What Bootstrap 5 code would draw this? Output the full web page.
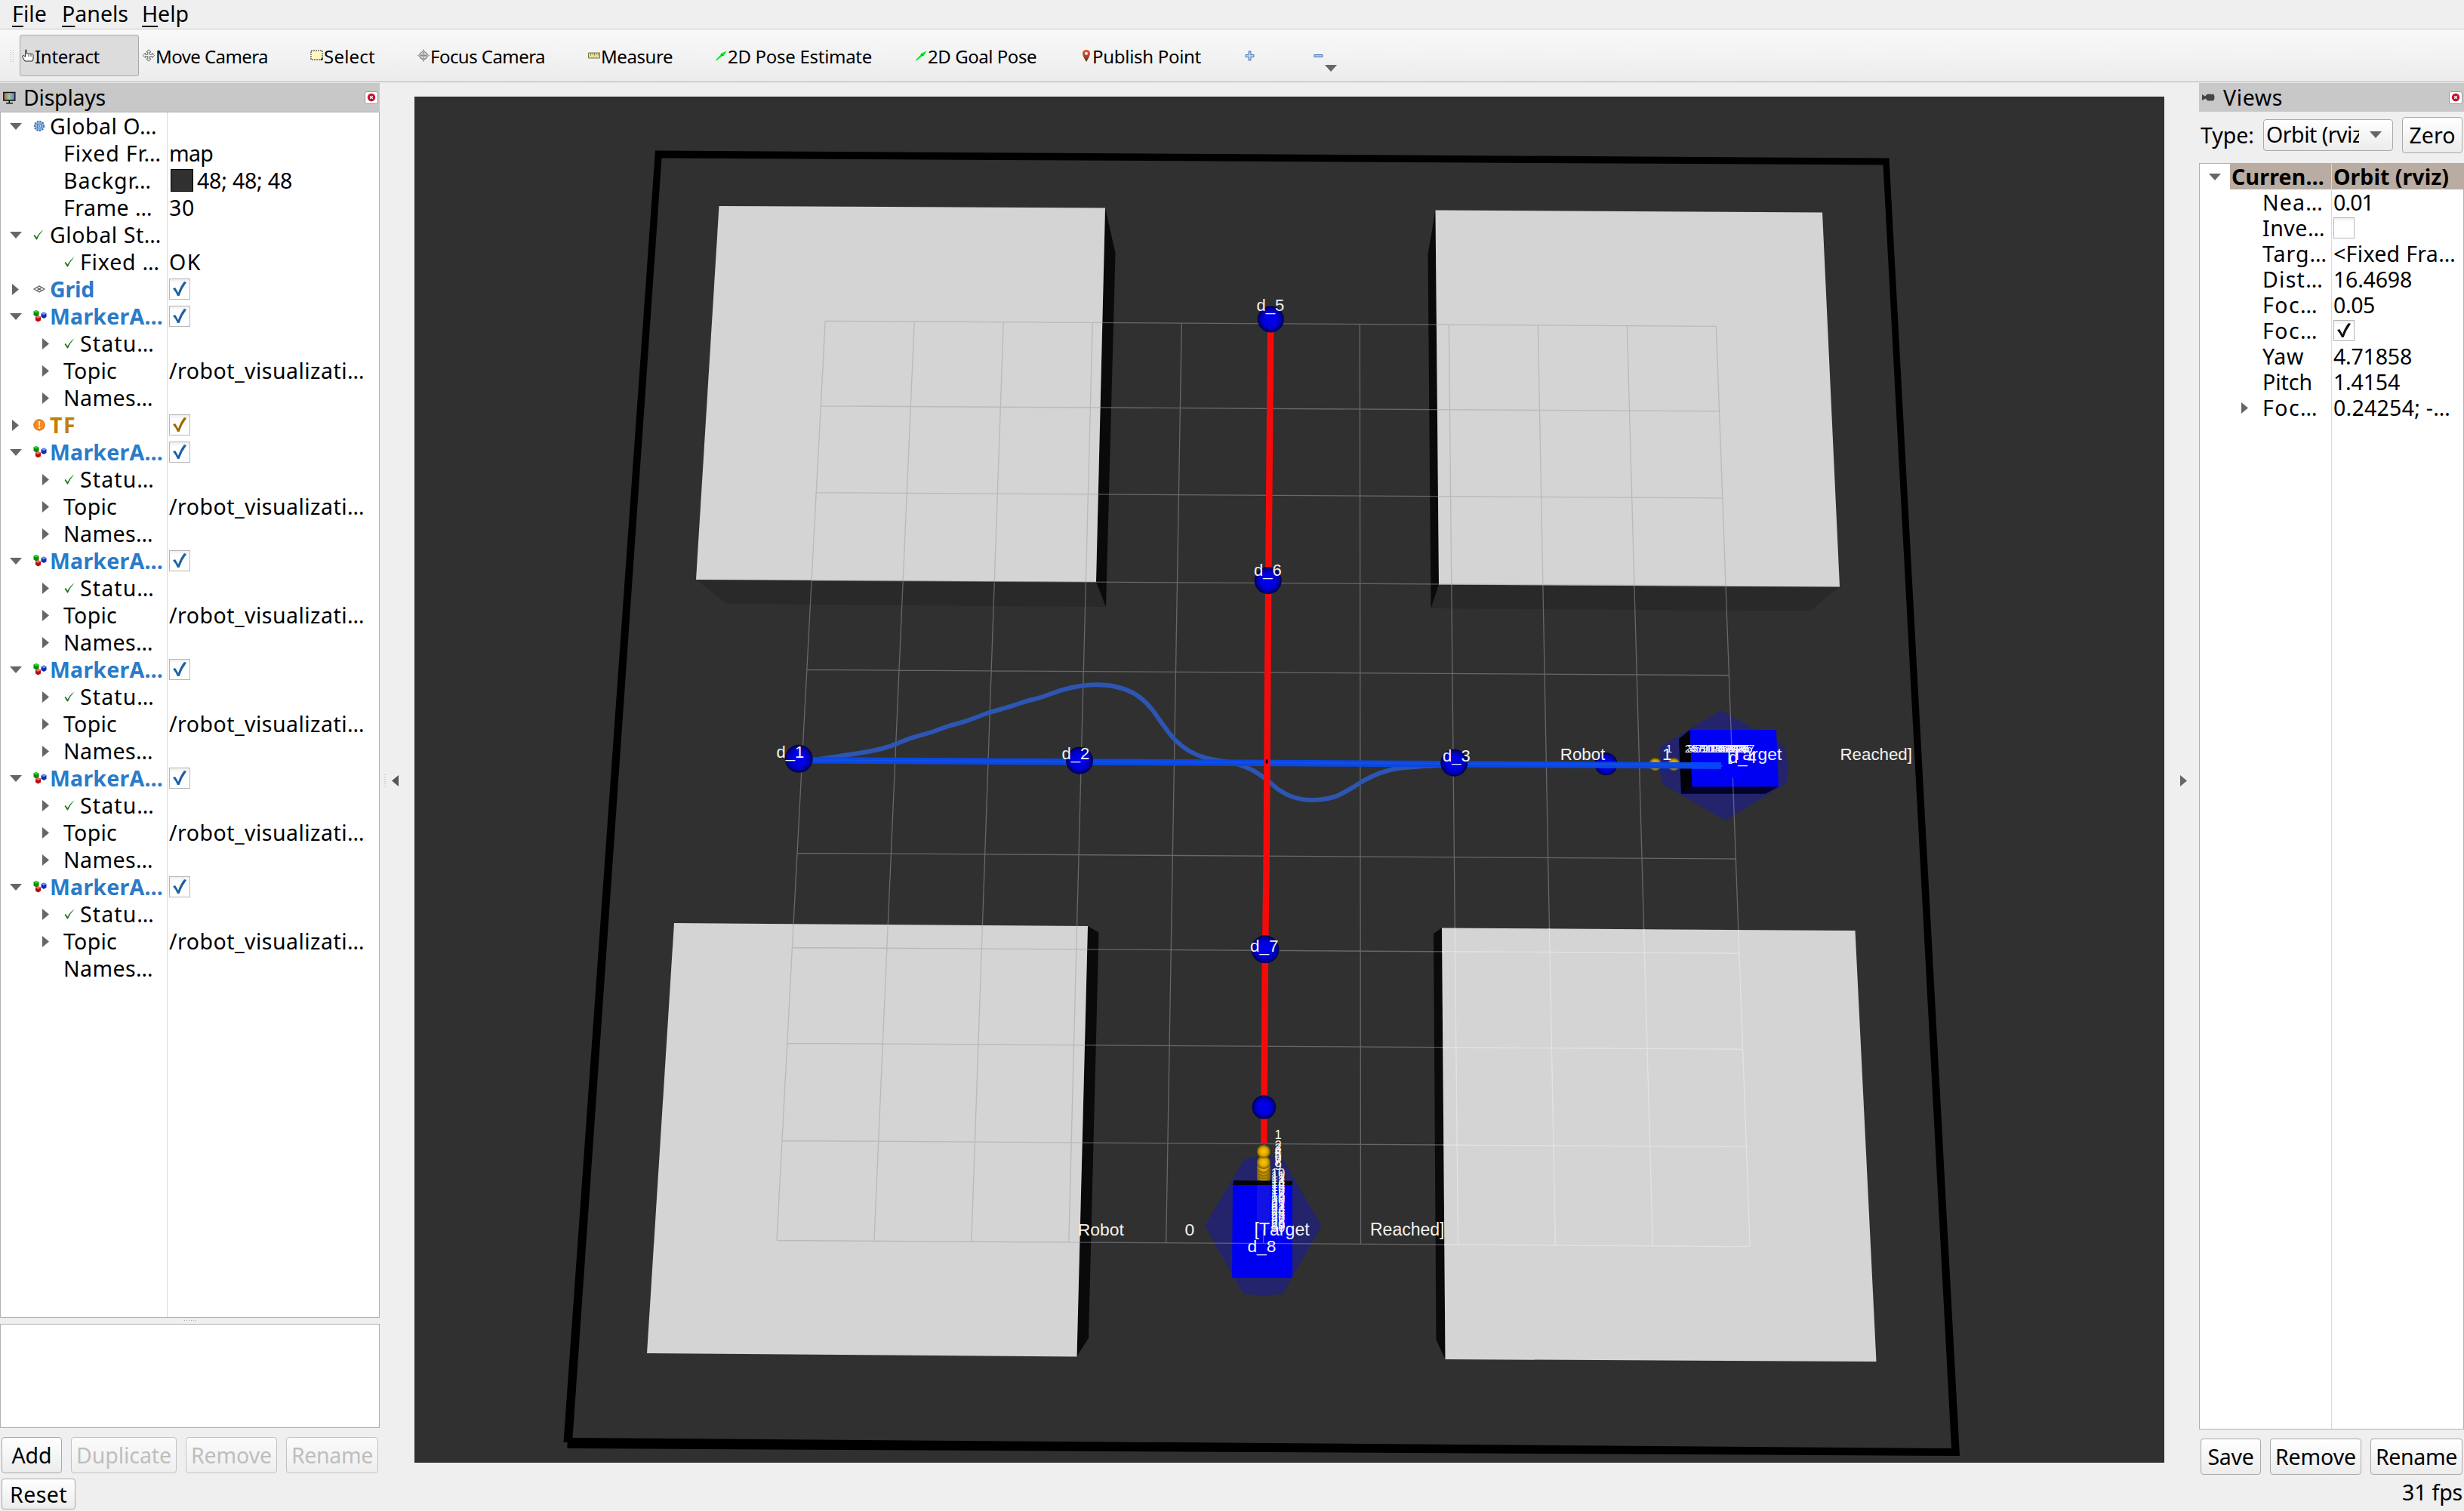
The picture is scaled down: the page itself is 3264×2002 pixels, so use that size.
<!DOCTYPE html>
<html lang="en">
<head>
<meta charset="utf-8">
<title>RViz</title>
<link rel="stylesheet" href="https://cdn.jsdelivr.net/npm/bootstrap@5.3.0/dist/css/bootstrap.min.css">
<script src="https://cdn.jsdelivr.net/npm/bootstrap@5.3.0/dist/js/bootstrap.bundle.min.js"></script>
<style>
body{width:3264px;height:2002px;overflow:hidden;background:#efefef;color:#000;font-family:"Noto Sans","Open Sans",sans-serif;font-size:28.5px;line-height:34px}
svg{display:block;flex:none}
.fit{white-space:nowrap;display:inline-block}
.menubar{height:39px;border-bottom:1px solid #cacaca;padding-left:16px}
.menubar u{text-decoration-thickness:2px;text-underline-offset:5px;text-decoration-skip-ink:none}
.m-item{height:38px;line-height:37px}
.toolstrip{height:70px;border-bottom:1px solid #b0b0b0;background:linear-gradient(#f9f9f9,#ececec);font-size:24px;padding-left:13px}
.tool{height:55px;padding:0 0 0 5px;gap:1px;border-radius:3px;flex:none}
.tool .fit{padding-top:3px}
.tool.on{background:#dcdcdc;border:1px solid #a8a8a8;padding-left:2px}
.work{height:1850px}
.dock-l{width:503px;padding-top:1px}
.dock-r{width:351px;padding-top:1px}
.dockhead{height:38px;background:#c8c8c8;flex:none}
.closer{width:18px;height:17px;background:#fff;border:1px solid #999;border-radius:3px;flex:none}
.tree{background:#fff;border:1px solid #b0b0b0;flex:none}
.tree .c1{border-right:1px solid #dadada}
.r36{height:36px}.r34{height:34px}
.cellbox{width:28px;height:28px;border:1px solid #b6b6b6;background:linear-gradient(#eee,#fff 20%)}
.swatch{width:30px;height:30px;background:#303030;border:1px solid #000;margin:0 5px 0 2px}
.b1{color:#2a7bc8;font-weight:700}.b2{color:#c08000;font-weight:700}
.pbtn{height:48px;border:1px solid #a9a9a9;border-radius:4px;background:linear-gradient(#fff,#ececec);color:#000;padding:0;flex:none;font-size:28.5px;line-height:34px}
.pbtn:disabled{border-color:#c2c2c2;color:#bebebe;opacity:1;background:linear-gradient(#fbfbfb,#eee)}
.split{width:46px}
.sel{background:#b9aca2;font-weight:700}
.combo{width:172px;height:42px}
.status{height:41px}
#scene text{font-family:"Liberation Sans",Arial,sans-serif;fill:#f2f2f2;font-kerning:none}
</style>
</head>
<body>
<svg width="0" height="0" class="position-absolute">
 <symbol id="i-down" viewBox="0 0 16 9"><path d="M0 0H16L8 9Z" fill="#666"/></symbol>
 <symbol id="i-right" viewBox="0 0 9 15"><path d="M0 0L9 7.5L0 15Z" fill="#666"/></symbol>
 <symbol id="i-ok" viewBox="0 0 14 14"><path d="M.5 8L2 7L4.5 10.5Q8 4 13.5 .5Q8 6 5 13.5H4Z" fill="#1d7a1d"/></symbol>
 <symbol id="i-tick" viewBox="0 0 26 26"><path d="M4 12.500L7 11Q9.500 14.500 11 18Q14 9 19 3L22 4Q16 12 12.500 22H10Q7.500 16 4 12.500Z" fill="currentColor"/></symbol>
 <symbol id="i-gear" viewBox="0 0 16 16"><circle cx="8" cy="8" r="6" fill="#8fb4e2" stroke="#4479b8" stroke-width="2.500" stroke-dasharray="2.200 1.300"/><circle cx="8" cy="8" r="5" fill="#8fb4e2"/><path d="M5.500 5.500H10.500V10.500H5.500Z" fill="#c4d8f2" stroke="#3f74b6"/><path d="M8 7V9M7 8H9" stroke="#3f74b6"/></symbol>
 <symbol id="i-grid" viewBox="0 0 16 16"><path d="M1 8L8 4L15 8L8 12ZM4.500 6L11.500 10M11.500 6L4.500 10" fill="none" stroke="#555" stroke-width="1.100"/></symbol>
 <symbol id="i-cubes" viewBox="0 0 18 17"><path d="M4 .5L7.500 2V7L4 9L.5 7V2Z" fill="#0a8a0a"/><path d="M4 .5L7.500 2.300L4 4.300L.5 2.300Z" fill="#1be61b"/><path d="M14 3L17.500 4.700V9.500L14 11.500L10.500 9.500V4.700Z" fill="#0c2cb4"/><path d="M14 3L17.500 5L14 7L10.500 5Z" fill="#6c90f5"/><path d="M6.500 7.500L10 9.200V14L6.500 16L3 14V9.200Z" fill="#b80c0c"/><path d="M6.500 7.500L10 9.500L6.500 11.500L3 9.500Z" fill="#f26a6a"/></symbol>
 <symbol id="i-warn" viewBox="0 0 16 16"><circle cx="8" cy="8" r="7.200" fill="#fb8a1e" stroke="#c7660e"/><path d="M7 3.200H9.200L8.800 9H7.400ZM7 10.500H9.200V12.700H7Z" fill="#fff"/></symbol>
 <symbol id="i-x" viewBox="0 0 12 12"><circle cx="6" cy="6" r="5.200" fill="#c8102e"/><path d="M4.200 4.200L7.800 7.800M7.800 4.200L4.200 7.800" stroke="#fff" stroke-width="1.300"/></symbol>
 <symbol id="i-arrow" viewBox="0 0 16 16"><path d="M1 13.500L8 6L7.500 5L15.500 1.500L11.500 8.500L10 8L2 14.500Z" fill="#00ee28"/><path d="M8 6L10 8" stroke="#087a18"/></symbol>
</svg>

<nav class="menubar d-flex">
 <div class="m-item" style="width:66px"><span class="fit" data-w="45"><u>F</u>ile</span></div>
 <div class="m-item" style="width:106px"><span class="fit" data-w="87"><u>P</u>anels</span></div>
 <div class="m-item"><span class="fit" data-w="61"><u>H</u>elp</span></div>
</nav>

<div class="toolstrip d-flex align-items-center">
 <svg width="13" height="18"><path d="M1.500 1V18M4.500 1V18" stroke="#b4b4b4" stroke-dasharray="1 2"/></svg>
 <div class="tool on d-flex align-items-center" style="width:158px"><svg width="16" height="17" viewBox="0 0 16 17"><path d="M4.500 10V1.500Q5.500 .3 6.500 1.500V6.500L7.500 5.500L9 6.500L10.500 5.800L12 6.800L13.500 6.300L15 7.500V13L14 16H4L1 11V9L2.500 8.500Z" fill="#fff" stroke="#222"/><path d="M9 7V10M12 7V10" stroke="#444"/></svg><span class="fit" data-w="85">Interact</span></div>
 <div class="tool d-flex align-items-center" style="width:222px"><svg width="16" height="17" viewBox="0 0 16 17"><path d="M8 .8L11 4H9.200V7.200H12.500V5.200L15.500 8.500L12.500 11.500V9.700H9.200V13H11L8 16.200L5 13H6.800V9.700H3.500V11.500L.5 8.500L3.500 5.200V7.200H6.800V4H5Z" fill="#f4f4f4" stroke="#555" stroke-width=".9"/></svg><span class="fit" data-w="148">Move Camera</span></div>
 <div class="tool d-flex align-items-center" style="width:142px"><svg width="17" height="17" viewBox="0 0 17 17"><path d="M1 2H16V14H1Z" fill="#fff6be" stroke="#222" stroke-dasharray="2 1"/><path d="M13 14.500L16.500 11V14.500Z"/></svg><span class="fit" data-w="67">Select</span></div>
 <div class="tool d-flex align-items-center" style="width:226px"><svg width="16" height="17" viewBox="0 0 16 17"><circle cx="8" cy="8.500" r="5" fill="none" stroke="#777" stroke-width="1.200"/><circle cx="8" cy="8.500" r="2.500" fill="none" stroke="#888"/><path d="M8 .5L9.500 4H6.500ZM8 16.500L9.500 13H6.500ZM.3 8.500L4 7V10ZM15.700 8.500L12 7V10Z" fill="#ddd" stroke="#777" stroke-width=".7"/><path d="M8 4V13M4 8.500H12" stroke="#888"/></svg><span class="fit" data-w="151">Focus Camera</span></div>
 <div class="tool d-flex align-items-center" style="width:168px"><svg width="16" height="16" viewBox="0 0 16 16"><path d="M.5 4H15.500V11H.5Z" fill="#e6dc9c" stroke="#777442"/><path d="M3.500 4V7.500M6 4V6.500M8.500 4V7.500M11 4V6.500M13.500 4V7.500" stroke="#777442" stroke-width=".8"/></svg><span class="fit" data-w="94">Measure</span></div>
 <div class="tool d-flex align-items-center" style="width:265px"><svg width="16" height="16"><use href="#i-arrow"/></svg><span class="fit" data-w="190">2D Pose Estimate</span></div>
 <div class="tool d-flex align-items-center" style="width:220px"><svg width="16" height="16"><use href="#i-arrow"/></svg><span class="fit" data-w="143">2D Goal Pose</span></div>
 <div class="tool d-flex align-items-center" style="width:217px"><svg width="14" height="18" viewBox="0 0 14 18"><defs><linearGradient id="pg" x2="0" y2="1"><stop offset="0" stop-color="#f0593a"/><stop offset=".5" stop-color="#b0442c"/><stop offset="1" stop-color="#3c3418"/></linearGradient></defs><path d="M7 1Q12 1 12 6Q12 9 7 17Q2 9 2 6Q2 1 7 1Z" fill="url(#pg)"/><circle cx="7" cy="5.800" r="1.900" fill="#fff"/></svg><span class="fit" data-w="143">Publish Point</span></div>
 <div class="tool d-flex align-items-center" style="width:91px"><svg width="13" height="14" viewBox="0 0 13 14"><path d="M5 1H8V5.500H12V8.500H8V13H5V8.500H1V5.500H5Z" fill="#b8d0ee" stroke="#4a78b8"/></svg></div>
 <div class="tool d-flex align-items-center"><svg width="13" height="14" viewBox="0 0 13 14"><path d="M1 5.500H12V8.500H1Z" fill="#a9c6ea" stroke="#4a78b8"/></svg></div>
 <svg class="align-self-end" width="16" height="9" style="margin:0 0 13px 2px"><use href="#i-down"/></svg>
</div>

<main class="work d-flex">
 <section class="dock-l d-flex flex-column">
  <header class="dockhead d-flex align-items-center ps-1">
   <svg width="17" height="17" viewBox="0 0 17 17"><defs><linearGradient id="mg"><stop offset="0" stop-color="#b85a5a"/><stop offset=".5" stop-color="#8fd08f"/><stop offset="1" stop-color="#6a6ae0"/></linearGradient></defs><path d="M.8 1.500H15.800V12H.8Z" fill="url(#mg)" stroke="#111" stroke-width="1.400"/><path d="M8.300 12V15M4 15.700H13" stroke="#111" stroke-width="1.500"/></svg>
   <span class="fit" data-w="108" style="margin-left:10px">Displays</span>
   <div class="closer ms-auto d-flex align-items-center justify-content-center"><svg width="12" height="12"><use href="#i-x"/></svg></div><div style="width:2px"></div>
  </header>
  <div class="tree d-flex" style="height:1598px">
   <div class="c1" id="dl" style="width:221px"></div>
   <div id="dv" class="flex-fill"></div>
  </div>
  <svg class="mx-auto" width="18" height="8"><path d="M1 3.500H18" stroke="#aaa" stroke-dasharray="1 2"/></svg>
  <div class="tree" style="height:138px"></div>
  <div class="d-flex" style="gap:12px;padding:12px 2px 0">
   <button class="btn pbtn" style="width:80px"><span class="fit" data-w="52">Add</span></button>
   <button class="btn pbtn" disabled style="width:140px"><span class="fit" data-w="125">Duplicate</span></button>
   <button class="btn pbtn" disabled style="width:121px"><span class="fit" data-w="106">Remove</span></button>
   <button class="btn pbtn" disabled style="width:122px"><span class="fit" data-w="107">Rename</span></button>
  </div>
 </section>
 <div class="split d-flex align-items-center justify-content-center gap-2"><svg width="2" height="18"><path d="M1 1V18" stroke="#aaa" stroke-dasharray="1 2"/></svg><svg width="9" height="15" viewBox="0 0 9 15" class="me-3"><path d="M9 0L0 7.500L9 15Z" fill="#555"/></svg></div>

 <svg id="scene" width="2318" height="1810" viewBox="549 128 2318 1810" style="margin-top:19px">
  <defs>
   <radialGradient id="ball"><stop offset="0" stop-color="#0000f5"/><stop offset=".55" stop-color="#0000dc"/><stop offset=".85" stop-color="#000096"/><stop offset="1" stop-color="#00003c"/></radialGradient>
   <radialGradient id="gold"><stop offset="0" stop-color="#ffc400"/><stop offset=".6" stop-color="#dba800"/><stop offset="1" stop-color="#6e5400"/></radialGradient>
  </defs>
  <rect x="549" y="128" width="2318" height="1810" fill="#303030"/>
  <path fill-rule="evenodd" d="M868 199.500L2502.500 209.500L2596 1929L751.500 1919V1911H746.500ZM876.500 209.500L758.500 1905L2585 1919L2494.500 218.500Z"/>
  <g fill="#292929"><path d="M922 768L1452 771L1465 804L963.500 800Z"/><path d="M1906 774L1895.500 806L2398 809.500L2437 777Z"/></g>
  <g fill="#0a0a0a"><path d="M1464 275.500L1477.500 335L1465 804L1452 771Z"/><path d="M1901.500 278L1891.500 337L1895.500 806L1906 774Z"/><path d="M1441 1227L1455.500 1235.500L1442 1773L1426.500 1797Z"/><path d="M1910 1229.500L1899 1237L1902.500 1775.500L1914.500 1801Z"/></g>
  <g fill="#d4d4d4"><path d="M952.500 273L1464 275.500L1452 771L922 768Z"/><path d="M1901.500 278.500L2414 281.500L2437 777.500L1906 774.500Z"/><path d="M893 1223L1441 1227L1426.500 1797.500L857 1793Z"/><path d="M1910 1229.500L2457.500 1233L2485.500 1804L1914.500 1801Z"/></g>
  <g fill="#24246c"><path d="M2280 941L2363.500 988.500L2369 1014L2366.500 1038L2285.500 1087L2201 1038L2197.500 1013L2199 989Z"/><path d="M1648 1535.500L1674 1531.500L1699.500 1535.500L1750.500 1624.500L1699.500 1714L1673.500 1717.500L1646.500 1714L1596 1624Z"/></g>
  <path d="M2238.700 967L2224 978.700L2227 1051.700L2241.500 1042.300Z" fill="#020208"/><path d="M2227 1051.700H2338.600L2356 1042.300H2241.500Z" fill="#02022a"/>
  <path d="M2238.700 967H2353L2356 1042.300H2241.500Z" fill="#0000f2"/>
  <path d="M1633 1569L1712 1569.500V1693H1632Z" fill="#0000f0"/>
  <clipPath id="cbr"><path d="M1910 1229.500L2457.500 1233L2485.500 1804L1914.500 1801Z"/></clipPath>
  <g id="grid" fill="none" stroke="#a0a0a4" stroke-opacity=".5" stroke-width="1.300"></g>
  <g id="grid2" fill="none" clip-path="url(#cbr)" stroke-width="2"></g>
  <path id="curve" fill="none" stroke="#2d55b2" stroke-width="6" stroke-linejoin="round"/>
  <circle cx="2127.500" cy="1012.300" r="15" fill="url(#ball)"/>
  <g fill="url(#gold)"><circle cx="2192.600" cy="1012.700" r="8.500"/><circle cx="2217.400" cy="1012.700" r="8.500"/></g>
  <circle cx="2299" cy="1014" r="17" fill="#0000fc"/>
  <path d="M1070 1007.300L2280 1014.500" stroke="#0b48de" stroke-width="8.500"/>
  <path d="M1070 1007L1680 1010.500L2280 1013.500" stroke="#1450f0" stroke-width="1.500" fill="none"/>
  <path d="M2242 1014.200L2280 1014.500" stroke="#0846fa" stroke-width="8.500"/>
  <path d="M1683.300 423L1679.500 860L1677.500 1160L1676 1258L1674.300 1516" stroke="#f50a0a" stroke-width="8.500" fill="none"/>
  <ellipse cx="1678" cy="1009" rx="1.500" ry="3" fill="#1a0030"/>
  <g fill="url(#ball)"><circle cx="1058.200" cy="1005.300" r="18.500"/><circle cx="1430" cy="1007.700" r="18"/><circle cx="1926.200" cy="1010.700" r="18"/><circle cx="1683.300" cy="423" r="17.500"/><circle cx="1679.700" cy="769.200" r="18"/><circle cx="1676" cy="1257.800" r="18.500"/><circle cx="1674.400" cy="1467" r="15.800"/></g>
  <g id="golds" fill="url(#gold)"></g>
  <path d="M1634.300 1564L1712 1564.700V1570H1633Z" fill="#04040c"/>
  <g id="labels" font-size="22"></g>
 </svg>

 <div class="split d-flex align-items-center justify-content-center"><svg width="9" height="15" style="margin-left:4px"><use href="#i-right"/></svg></div>
 <section class="dock-r d-flex flex-column">
  <header class="dockhead d-flex align-items-center ps-1">
   <svg width="17" height="10" viewBox="0 0 17 10"><path d="M0 1L4 3.500L6 1.500Q8 0 10 .8H14Q16.500 1 16.500 5T14 9.500H8Q6 9 5 6.500L0 9Z" fill="#444"/></svg>
   <span class="fit" data-w="78" style="margin-left:11px">Views</span>
   <div class="closer ms-auto d-flex align-items-center justify-content-center"><svg width="12" height="12"><use href="#i-x"/></svg></div><div style="width:2px"></div>
  </header>
  <div class="d-flex align-items-center" style="height:68px;padding:0 2px 7px 2px">
   <span class="fit" data-w="70">Type:</span>
   <div class="pbtn combo d-flex align-items-center" style="margin-left:12px"><div class="overflow-hidden" style="width:126px;padding-left:3px;height:35px"><span class="fit" data-w="134">Orbit (rviz)</span></div><svg width="16" height="9" style="margin-left:14px"><use href="#i-down"/></svg></div>
   <button class="btn pbtn ms-auto" style="width:80px"><span class="fit" data-w="60">Zero</span></button>
  </div>
  <div class="tree d-flex" style="height:1678px">
   <div class="c1" id="vl" style="width:175px"></div>
   <div id="vv" class="flex-fill"></div>
  </div>
  <div class="d-flex" style="gap:12px;padding:12px 2px 0">
   <button class="btn pbtn" style="width:80px"><span class="fit" data-w="60">Save</span></button>
   <button class="btn pbtn" style="width:121px"><span class="fit" data-w="106">Remove</span></button>
   <button class="btn pbtn" style="width:122px"><span class="fit" data-w="107">Rename</span></button>
  </div>
 </section>
</main>
<footer class="status d-flex justify-content-between" style="padding:0 2px">
 <button class="btn pbtn" style="width:98px;height:41px"><span class="fit" data-w="75">Reset</span></button>
 <span class="fit" data-w="79" style="padding-top:1px">31 fps</span>
</footer>

<script>
const $=id=>document.getElementById(id);
const ic=(n,w,h)=>`<svg width="${w}" height="${h}"><use href="#${n}"/></svg>`;
const tx=(t,w,c)=>`<span class="fit ${c||''}" data-w="${w}">${t}</span>`;
const box=(col)=>`<div class="cellbox d-flex" style="color:${col||'#000'}">${col?ic('i-tick',26,26):''}</div>`;

/* Displays tree: [depth, arrow, icon, label, width, class, value html] */
const marker=last=>[
 [0,'d','i-cubes','MarkerA…',149,'b1',box('#1c60a6')],
 [1,'r','i-ok','Statu…',98,'',''],
 [1,'r','','Topic',70,'',tx('/robot_visualizati…',258)],
 [1,last?'':'r','','Names…',118,'','']];
const rows=[
 [0,'d','i-gear','Global O…',141,'',''],
 [1,'','','Fixed Fr…',129,'',tx('map',57)],
 [1,'','','Backgr…',116,'','<div class="swatch"></div>'+tx('48; 48; 48',125)],
 [1,'','','Frame …',117,'',tx('30',33)],
 [0,'d','i-ok','Global St…',147,'',''],
 [1,'','i-ok','Fixed …',105,'',tx('OK',42)],
 [0,'r','i-grid','Grid',58,'b1',box('#1c60a6')],
 ...marker(),
 [0,'r','i-warn','TF',34,'b2',box('#9c6800')],
 ...marker(),...marker(),...marker(),...marker(),...marker(true)];
let L='',V='';
for(const [d,a,i,t,w,c,v] of rows){
 const arrow=a==='d'?ic('i-down',16,9):a==='r'?ic('i-right',9,15):'';
 const iw=i==='i-cubes'?18:i==='i-ok'?14:16;
 L+=`<div class="r36 d-flex align-items-center"><div class="d-flex" style="width:${d?83:42}px;padding-left:${d?55:(a==='r'?15:12)}px">${arrow}</div>`+
  (i?`<div style="width:${d?22:23}px;padding-left:1px">${ic(i,iw,iw)}</div>`:'')+tx(t,w,c)+'</div>';
 V+=`<div class="r36 d-flex align-items-center" style="padding-left:2px">${v}</div>`;
}
$('dl').innerHTML=L;$('dv').innerHTML=V;

const views=[['Nea…',80,tx('0.01',52)],['Inve…',82,box('')],['Targ…',85,tx('&lt;Fixed Fra…',161)],['Dist…',80,tx('16.4698',103)],['Foc…',73,tx('0.05',54)],['Foc…',73,box('#111')],['Yaw',54,tx('4.71858',103)],['Pitch',65,tx('1.4154',87)],['Foc…',73,tx('0.24254; -…',154)]];
L=`<div class="r34 d-flex align-items-center"><div style="width:40px;padding-left:12px">${ic('i-down',16,9)}</div><div class="sel r34 flex-fill" style="padding-left:2px">${tx('Curren…',122)}</div></div>`;
V=`<div class="r34 sel" style="padding-left:2px">${tx('Orbit (rviz)',152)}</div>`;
views.forEach(([t,w,v],k)=>{
 L+=`<div class="r34 d-flex align-items-center"><div style="width:83px;padding-left:55px">${k===8?ic('i-right',9,15):''}</div>${tx(t,w)}</div>`;
 V+=`<div class="r34 d-flex align-items-center" style="padding-left:2px">${v}</div>`;
});
$('vl').innerHTML=L;$('vv').innerHTML=V;

/* tighten or loosen tracking so each label takes its set width */
document.querySelectorAll('.fit').forEach(e=>{
 const n=e.textContent.length,w=e.getBoundingClientRect().width;
 e.style.letterSpacing=((+e.dataset.w+1-w)/n).toFixed(3)+'px';
});

/* ground grid in perspective */
const ys=[425.4,537.9,652.7,769,887.4,1007.5,1130.4,1255.5,1382.3,1511.5,1643.5];
let g='';
for(let i=0;i<=10;i++){
 g+=`M${1093.2+118.02*i} ${425.4+.69*i}L${1029+128.92*i} ${1643.5+.81*i}`;
 const f=(ys[i]-425.4)/1218.1;
 g+=`M${1093.2-64.2*f} ${ys[i]}L${2273.4+44.8*f} ${ys[i]+6.9+1.2*f}`;
}
$('grid').innerHTML=`<path d="${g}"/>`;
$('grid2').innerHTML=`<path d="${g}" stroke="#d4d4d4"/><path d="${g}" stroke="#e2e2e2" stroke-width="1.500"/>`;

/* planned path, Catmull-Rom through samples */
const p=[[1078,1007],[1113,1001.7],[1154.5,995],[1180,988.3],[1205.5,978.3],[1234,970],[1256.6,962],[1278.9,955.7],[1307.6,945],[1333,937.7],[1358.6,929.3],[1380.9,923.3],[1406.4,914.3],[1432,908.8],[1454.3,907.3],[1476.6,909.5],[1498.9,917],[1514.8,928],[1527.6,942],[1540.4,960],[1556.3,980],[1575.4,995],[1597.8,1004.3],[1636,1011.7],[1658.3,1020],[1677.5,1032.7],[1693.4,1046],[1712.6,1056],[1738,1060],[1766.8,1056],[1789,1045],[1808.2,1033.3],[1830.5,1023.3],[1852.9,1018],[1878.4,1015.7],[1910,1014]];
let d='M'+p[0];
for(let i=0;i<p.length-1;i++){const a=p[i-1]||p[i],b=p[i],c=p[i+1],e=p[i+2]||c;
 d+=`C${b[0]+(c[0]-a[0])/6} ${b[1]+(c[1]-a[1])/6} ${c[0]-(e[0]-b[0])/6} ${c[1]-(e[1]-b[1])/6} ${c}`;}
$('curve').setAttribute('d',d);

g='<rect x="1665" y="1569" width="17.500" height="61" fill="#1212e4"/>';
for(const y of [1560,1557,1553.5,1550,1546,1540,1525.7]) g+=`<circle cx="1673.900" cy="${y}" r="9"/>`;
$('golds').innerHTML=g;

/* waypoint and robot captions */
let s='';
const t=(x,y,v,f,m)=>s+=`<text x="${x}" y="${y}"${f?` font-size="${f}"`:''}${m?' text-anchor="middle"':''}>${v}</text>`;
t(1028.5,1004,'d_1');t(1406.5,1006.2,'d_2');t(1911,1009,'d_3');t(1664.5,412,'d_5',22);t(1661,763,'d_6',22);t(1656,1261,'d_7',22.5);t(1652.5,1658.5,'d_8',22.7);t(2290,1011,'d_4',22);
t(2066.8,1007,'Robot',22.3);t(2202,1007,'1',22.3);t(2288,1007,'[Target',22.8);t(2437.5,1007,'Reached]',22.3);
t(1427.8,1637,'Robot',22.9);t(1569.5,1637,'0',22.9);t(1661.5,1637,'[Target',23.1);t(1815,1637,'Reached]',23);
t(2211,997.3,'1',15,1);
for(let n=2;n<=27;n++)t(2236+(n-2)*3.2,997.3,n,15,1);
t(1693,1509.3,'1',16.5,1);
for(let n=2;n<=30;n++)t(1693,n<10?1523+(n-2)*3.9:1560+(n-10)*3.6,n,16.5,1);
$('labels').innerHTML=s;
</script>
</body>
</html>
